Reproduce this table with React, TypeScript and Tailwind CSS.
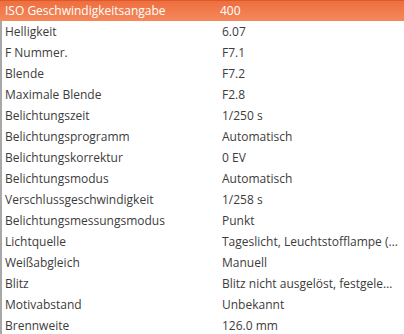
import React from "react";

const rows: [string, string][] = [
  ["ISO Geschwindigkeitsangabe", "400"],
  ["Helligkeit", "6.07"],
  ["F Nummer.", "F7.1"],
  ["Blende", "F7.2"],
  ["Maximale Blende", "F2.8"],
  ["Belichtungszeit", "1/250 s"],
  ["Belichtungsprogramm", "Automatisch"],
  ["Belichtungskorrektur", "0 EV"],
  ["Belichtungsmodus", "Automatisch"],
  ["Verschlussgeschwindigkeit", "1/258 s"],
  ["Belichtungsmessungsmodus", "Punkt"],
  ["Lichtquelle", "Tageslicht, Leuchtstofflampe (…"],
  ["Weißabgleich", "Manuell"],
  ["Blitz", "Blitz nicht ausgelöst, festgele…"],
  ["Motivabstand", "Unbekannt"],
  ["Brennweite", "126.0 mm"],
];

export default function App() {
  return (
    <div className="w-[404px] h-[334px] overflow-hidden bg-white font-['Open_Sans',sans-serif] text-[12px] text-[#3c3c3c]">
      {rows.map(([label, value], i) => (
        <div
          key={label}
          className={
            i === 0
              ? "grid grid-cols-[220px_1fr] h-[21px] items-center border-t border-[#dc5a2a] bg-gradient-to-b from-[#ee6e3e] to-[#f4895c] text-white"
              : "grid grid-cols-[220px_1fr] h-[21px] items-center border-l-2 border-[#a8a8a8]"
          }
        >
          <span className={i === 0 ? "pl-[5px] whitespace-nowrap" : "pl-[3px] whitespace-nowrap"}>{label}</span>
          <span className="whitespace-nowrap overflow-hidden">{value}</span>
        </div>
      ))}
    </div>
  );
}
